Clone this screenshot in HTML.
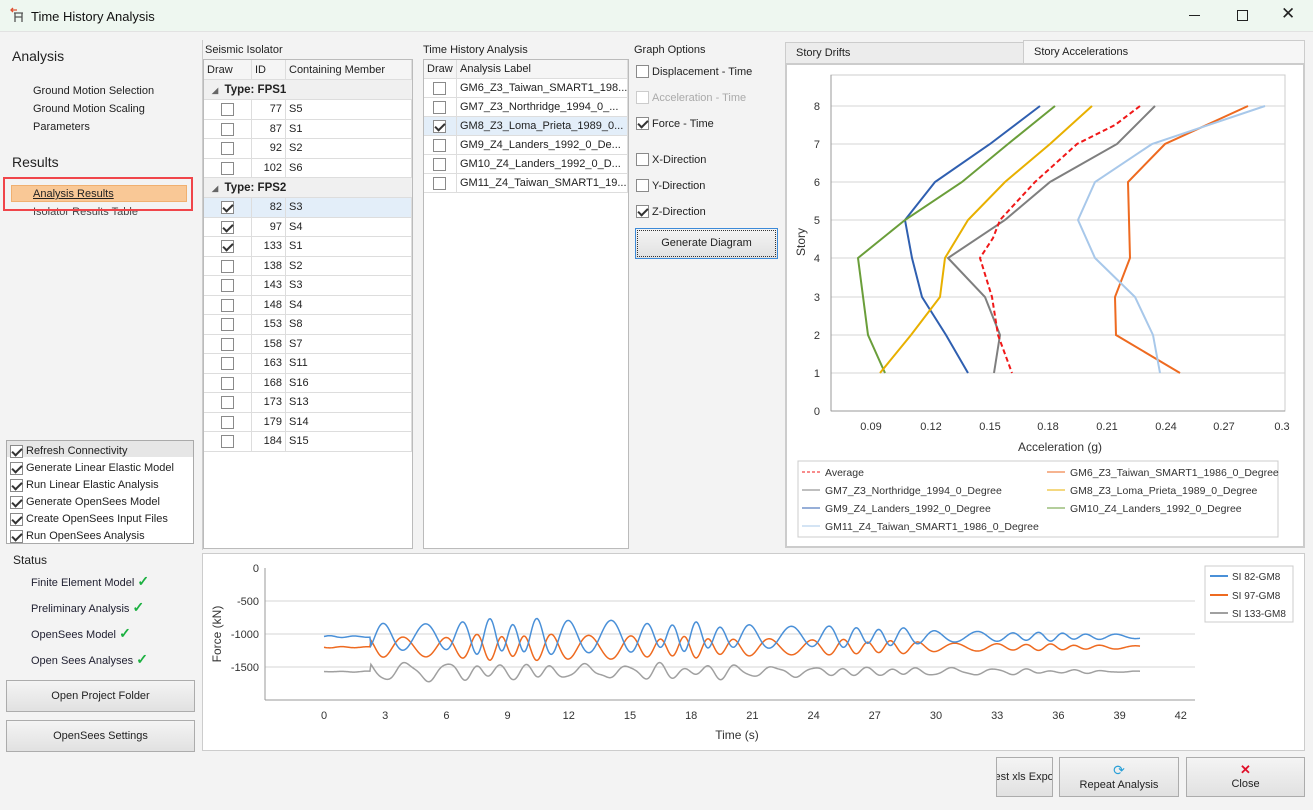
<!DOCTYPE html>
<html><head><meta charset="utf-8"><style>
*{box-sizing:border-box;margin:0;padding:0}
body{width:1313px;height:810px;overflow:hidden;background:#f3f3f3;font-family:"Liberation Sans",sans-serif;font-size:11px;color:#222;position:relative}
.a{position:absolute}
.cb{position:absolute;width:13px;height:13px;border:1px solid #8a8a8a;background:#fff}
.cb.k::after{content:"";position:absolute;left:3px;top:0px;width:4px;height:8px;border:solid #333;border-width:0 2px 2px 0;transform:rotate(45deg)}
.btn{position:absolute;border:1px solid #acacac;background:linear-gradient(#f4f4f4,#e1e1e1);text-align:center;font-size:11px;color:#222}
table{border-collapse:collapse}
</style></head><body>
<!-- title bar -->
<div class="a" style="left:0;top:0;width:1313px;height:32px;background:#eef7f0;border-bottom:1px solid #e2e2e2"></div>
<svg class="a" style="left:9px;top:7px" width="16" height="16"><path d="M2 3h6M4 1l-2 2 2 2" stroke="#e05030" fill="none" stroke-width="1.3"/><path d="M5 6h9M6 6v9M13 6v9M6 10h7" stroke="#555" fill="none" stroke-width="1.3"/></svg>
<div class="a" style="left:31px;top:9px;font-size:13px;color:#111">Time History Analysis</div>
<div class="a" style="left:1189px;top:15px;width:11px;height:1px;background:#222"></div>
<div class="a" style="left:1237px;top:10px;width:11px;height:11px;border:1px solid #222"></div>
<div class="a" style="left:1281px;top:4px;font-size:17px;color:#222">✕</div>

<!-- left nav -->
<div class="a" style="left:12px;top:48px;font-size:14px">Analysis</div>
<div class="a" style="left:33px;top:82px;line-height:18px">Ground Motion Selection<br>Ground Motion Scaling<br>Parameters</div>
<div class="a" style="left:12px;top:154px;font-size:14px">Results</div>
<div class="a" style="left:33px;top:206px;color:#444">Isolator Results Table</div>
<div class="a" style="left:11px;top:185px;width:176px;height:17px;background:#f9c896;border:1px solid #f0b070"></div>
<div class="a" style="left:33px;top:188px;text-decoration:underline">Analysis Results</div>
<div class="a" style="left:3px;top:177px;width:190px;height:34px;border:2px solid #f0454a"></div>

<div class="a" style="left:6px;top:440px;width:188px;height:104px;border:1px solid #aaa;background:#fff"></div>
<div class="a" style="left:7px;top:441px;width:186px;height:16px;background:#e6e6e6"></div>
<div class="a" style="left:10px;top:443px;line-height:17px;">
<div style="position:relative;padding-left:16px">Refresh Connectivity<span class="cb k" style="left:0;top:2px"></span></div>
<div style="position:relative;padding-left:16px">Generate Linear Elastic Model<span class="cb k" style="left:0;top:2px"></span></div>
<div style="position:relative;padding-left:16px">Run Linear Elastic Analysis<span class="cb k" style="left:0;top:2px"></span></div>
<div style="position:relative;padding-left:16px">Generate OpenSees Model<span class="cb k" style="left:0;top:2px"></span></div>
<div style="position:relative;padding-left:16px">Create OpenSees Input Files<span class="cb k" style="left:0;top:2px"></span></div>
<div style="position:relative;padding-left:16px">Run OpenSees Analysis<span class="cb k" style="left:0;top:2px"></span></div>
</div>
<div class="a" style="left:13px;top:553px;font-size:12px">Status</div>
<div class="a" style="left:31px;top:573px;color:#223">Finite Element Model <span style="color:#1bb040;font-size:14px;font-weight:bold">✓</span></div>
<div class="a" style="left:31px;top:599px;color:#223">Preliminary Analysis <span style="color:#1bb040;font-size:14px;font-weight:bold">✓</span></div>
<div class="a" style="left:31px;top:625px;color:#223">OpenSees Model <span style="color:#1bb040;font-size:14px;font-weight:bold">✓</span></div>
<div class="a" style="left:31px;top:651px;color:#223">Open Sees Analyses <span style="color:#1bb040;font-size:14px;font-weight:bold">✓</span></div>
<div class="btn" style="left:6px;top:680px;width:189px;height:32px;line-height:30px">Open Project Folder</div>
<div class="btn" style="left:6px;top:720px;width:189px;height:32px;line-height:30px">OpenSees Settings</div>

<!-- Seismic isolator -->
<div class="a" style="left:202px;top:40px;width:1px;height:510px;background:#ccc"></div>
<div class="a" style="left:205px;top:44px">Seismic Isolator</div>
<div class="a" style="left:203px;top:59px;width:210px;height:490px;border:1px solid #bbb;background:#fff"></div>
<div class="a" id="iso" style="left:204px;top:60px;width:208px"></div>

<!-- TH analysis -->
<div class="a" style="left:423px;top:44px">Time History Analysis</div>
<div class="a" style="left:423px;top:59px;width:206px;height:490px;border:1px solid #bbb;background:#fff"></div>
<div class="a" id="th" style="left:424px;top:60px;width:204px"></div>

<!-- graph options -->
<div class="a" style="left:634px;top:44px">Graph Options</div>
<div class="cb" style="left:636px;top:65px"></div><div class="a" style="left:652px;top:66px">Displacement - Time</div>
<div class="cb" style="left:636px;top:91px;border-color:#ccc"></div><div class="a" style="left:652px;top:92px;color:#aaa">Acceleration - Time</div>
<div class="cb k" style="left:636px;top:117px"></div><div class="a" style="left:652px;top:118px">Force - Time</div>
<div class="cb" style="left:636px;top:153px"></div><div class="a" style="left:652px;top:154px">X-Direction</div>
<div class="cb" style="left:636px;top:179px"></div><div class="a" style="left:652px;top:180px">Y-Direction</div>
<div class="cb k" style="left:636px;top:205px"></div><div class="a" style="left:652px;top:206px">Z-Direction</div>
<div class="btn" style="left:635px;top:228px;width:143px;height:31px;line-height:29px;border:1px solid #3c8ad8;outline:1px dotted #333;outline-offset:-3px">Generate Diagram</div>

<!-- tabs -->
<div class="a" style="left:785px;top:42px;width:240px;height:22px;background:#ececec;border:1px solid #ccc;padding:4px 0 0 10px">Story Drifts</div>
<div class="a" style="left:1023px;top:40px;width:282px;height:24px;background:#f6f6f6;border:1px solid #ccc;padding:5px 0 0 10px">Story Accelerations</div>
<div class="a" style="left:785px;top:63px;width:520px;height:485px;border:2px solid #ccc;background:#fff"></div>
<svg class="a" style="left:785px;top:63px" width="520" height="485" font-family="Liberation Sans" font-size="11" fill="#333">
<g transform="translate(-785,-63)">
<rect x="831" y="75" width="454" height="336" fill="none" stroke="#ccc"/>
<g stroke="#d6d6d6"><line x1="831" x2="1285" y1="106" y2="106"/><line x1="831" x2="1285" y1="144" y2="144"/><line x1="831" x2="1285" y1="182" y2="182"/><line x1="831" x2="1285" y1="220" y2="220"/><line x1="831" x2="1285" y1="258" y2="258"/><line x1="831" x2="1285" y1="297" y2="297"/><line x1="831" x2="1285" y1="335" y2="335"/><line x1="831" x2="1285" y1="373" y2="373"/></g>
<line x1="831" y1="75" x2="831" y2="411" stroke="#999"/><line x1="831" y1="411" x2="1285" y1="411" y2="411" stroke="#999"/>
<g text-anchor="end"><text x="820" y="110">8</text><text x="820" y="148">7</text><text x="820" y="186">6</text><text x="820" y="224">5</text><text x="820" y="262">4</text><text x="820" y="301">3</text><text x="820" y="339">2</text><text x="820" y="377">1</text><text x="820" y="415">0</text></g>
<g text-anchor="middle"><text x="871" y="430">0.09</text><text x="931" y="430">0.12</text><text x="990" y="430">0.15</text><text x="1048" y="430">0.18</text><text x="1107" y="430">0.21</text><text x="1166" y="430">0.24</text><text x="1224" y="430">0.27</text><text x="1282" y="430">0.3</text>
<text x="1060" y="451" font-size="12">Acceleration (g)</text></g>
<text transform="translate(805,242) rotate(-90)" text-anchor="middle" font-size="12">Story</text>
<g fill="none" stroke-width="2">
<polyline stroke="#2f5fb0" points="1040,106 990,144 935,182 905,220 912,258 922,297 946,335 968,373"/>
<polyline stroke="#6a9e3a" points="1055,106 1008,144 962,182 905,220 858,258 868,335 885,373"/>
<polyline stroke="#e8b000" points="1092,106 1050,144 1005,182 968,220 945,258 940,297 911,335 880,373"/>
<polyline stroke="#7f7f7f" points="1155,106 1117,144 1050,182 1005,220 948,258 985,297 1000,335 994,373"/>
<polyline stroke="#ee6a20" points="1248,106 1165,144 1128,182 1130,258 1115,297 1116,335 1180,373"/>
<polyline stroke="#a8c8ea" points="1265,106 1152,144 1095,182 1078,220 1095,258 1135,297 1153,335 1160,373"/>
<polyline stroke="#f01818" stroke-dasharray="5,3" points="1140,106 1115,125 1077,144 1035,182 1000,220 993,238 980,258 992,297 998,335 1012,373"/>
</g>
<rect x="798" y="461" width="480" height="76" fill="none" stroke="#ccc"/>
<g font-size="10.5">
<line x1="802" x2="820" y1="472" y2="472" stroke="#f01818" stroke-dasharray="3,2"/><text x="825" y="476">Average</text>
<line x1="802" x2="820" y1="490" y2="490" stroke="#7f7f7f"/><text x="825" y="494">GM7_Z3_Northridge_1994_0_Degree</text>
<line x1="802" x2="820" y1="508" y2="508" stroke="#2f5fb0"/><text x="825" y="512">GM9_Z4_Landers_1992_0_Degree</text>
<line x1="802" x2="820" y1="526" y2="526" stroke="#a8c8ea"/><text x="825" y="530">GM11_Z4_Taiwan_SMART1_1986_0_Degree</text>
<line x1="1047" x2="1065" y1="472" y2="472" stroke="#ee6a20"/><text x="1070" y="476">GM6_Z3_Taiwan_SMART1_1986_0_Degree</text>
<line x1="1047" x2="1065" y1="490" y2="490" stroke="#e8b000"/><text x="1070" y="494">GM8_Z3_Loma_Prieta_1989_0_Degree</text>
<line x1="1047" x2="1065" y1="508" y2="508" stroke="#6a9e3a"/><text x="1070" y="512">GM10_Z4_Landers_1992_0_Degree</text>
</g></g></svg>

<!-- force chart -->
<div class="a" style="left:202px;top:553px;width:1103px;height:198px;border:1px solid #ccc;background:#fff"></div>
<svg class="a" style="left:0;top:0" width="1313" height="810" font-family="Liberation Sans" font-size="11" fill="#333" id="fc">
<g stroke="#d6d6d6"><line x1="265" x2="1195" y1="601" y2="601"/><line x1="265" x2="1195" y1="634" y2="634"/><line x1="265" x2="1195" y1="667" y2="667"/></g>
<line x1="265" y1="568" x2="265" y2="700" stroke="#999"/><line x1="265" y1="700" x2="1195" y2="700" stroke="#999"/>
<g text-anchor="end"><text x="259" y="572">0</text><text x="259" y="605">-500</text><text x="259" y="638">-1000</text><text x="259" y="671">-1500</text></g>
<g text-anchor="middle" id="xt"></g>
<text x="737" y="739" text-anchor="middle" font-size="12">Time (s)</text>
<text transform="translate(221,634) rotate(-90)" text-anchor="middle" font-size="12">Force (kN)</text>
<rect x="1205" y="566" width="88" height="56" fill="#fff" stroke="#ccc"/>
<line x1="1210" x2="1228" y1="576" y2="576" stroke="#4a90d8" stroke-width="2"/><text x="1232" y="580" font-size="10">SI 82-GM8</text>
<line x1="1210" x2="1228" y1="595" y2="595" stroke="#ee6a20" stroke-width="2"/><text x="1232" y="599" font-size="10">SI 97-GM8</text>
<line x1="1210" x2="1228" y1="613" y2="613" stroke="#a0a0a0" stroke-width="2"/><text x="1232" y="617" font-size="10">SI 133-GM8</text>
<polyline id="p3" fill="none" stroke="#a0a0a0" stroke-width="1.5"/>
<polyline id="p2" fill="none" stroke="#ee6a20" stroke-width="1.5"/>
<polyline id="p1" fill="none" stroke="#4a90d8" stroke-width="1.5"/>
</svg>

<!-- bottom buttons -->
<div class="btn" style="left:996px;top:757px;width:57px;height:40px;line-height:38px;overflow:hidden;white-space:nowrap;text-indent:-8px">Test xls Export</div>
<div class="btn" style="left:1059px;top:757px;width:120px;height:40px;padding-top:4px"><span style="color:#2aa0d8;font-size:14px">⟳</span><br>Repeat Analysis</div>
<div class="btn" style="left:1186px;top:757px;width:119px;height:40px;padding-top:4px"><span style="color:#e0102a;font-size:13px;font-weight:bold">✕</span><br>Close</div>

<script>
function row(cells,ws,h,bg,bold){var s='<div style="display:flex;height:'+h+'px;border-bottom:1px solid #ddd;background:'+(bg||'#fff')+'">';cells.forEach(function(c,i){s+='<div style="position:relative;width:'+ws[i]+'px;border-right:1px solid #ddd;padding:0 3px;line-height:'+h+'px;white-space:nowrap;overflow:hidden;'+(c.r?'text-align:right;':'')+'">'+c.t+'</div>'});return s+'</div>';}
var W=[48,34,126];var s=row([{t:'Draw'},{t:'ID'},{t:'Containing Member'}],W,20,'#f5f5f5');
function grp(n){return '<div style="height:20px;line-height:20px;background:#f0f0f0;border-bottom:1px solid #ddd;font-weight:bold;font-size:11.5px;padding-left:8px"><span style="font-size:8px;color:#666">◢</span>&nbsp; Type: '+n+'</div>';}
function cb(k){return '<span class="cb'+(k?' k':'')+'" style="left:17px;top:3px"></span>';}
s+=grp('FPS1');[[77,'S5'],[87,'S1'],[92,'S2'],[102,'S6']].forEach(function(r){s+=row([{t:cb(0)},{t:r[0],r:1},{t:r[1]}],W,19.5)});
s+=grp('FPS2');[[82,'S3',1],[97,'S4',1],[133,'S1',1],[138,'S2'],[143,'S3'],[148,'S4'],[153,'S8'],[158,'S7'],[163,'S11'],[168,'S16'],[173,'S13'],[179,'S14'],[184,'S15']].forEach(function(r,i){s+=row([{t:cb(r[2])},{t:r[0],r:1},{t:r[1]}],W,19.5,i==0?'#e3eef9':'#fff')});
document.getElementById('iso').innerHTML=s;
var W2=[33,171];s=row([{t:'Draw'},{t:'Analysis Label'}],W2,19,'#f5f5f5');
['GM6_Z3_Taiwan_SMART1_198...','GM7_Z3_Northridge_1994_0_...','GM8_Z3_Loma_Prieta_1989_0...','GM9_Z4_Landers_1992_0_De...','GM10_Z4_Landers_1992_0_D...','GM11_Z4_Taiwan_SMART1_19...'].forEach(function(t,i){s+=row([{t:'<span class="cb'+(i==2?' k':'')+'" style="left:9px;top:3px"></span>'},{t:t}],W2,19,i==2?'#e3eef9':'#fff')});
document.getElementById('th').innerHTML=s;
var xt='';for(var t=0;t<=42;t+=3){var x=324+t*20.4;xt+='<text x="'+x+'" y="719">'+t+'</text>';}document.getElementById('xt').innerHTML=xt;
function env(t){if(t<2.3)return 0.05;if(t<13)return 1;return Math.max(0.1,1-(t-13)/30);}
var a='',b='',c='';
for(var t=0;t<=40;t+=0.05){var x=324+t*20.4;var e=env(t);
var w=Math.sin(t*4.2+Math.sin(t*0.7)*2)*e;var w2=Math.sin(t*3.1+1)*e*0.4;
var f1=-1040-(w*230+w2*120);var f2=-1200+(w*170+w2*80);var f3=-1570+(w*120-w2*100)+Math.sin(t*7)*20*e;
a+=x+','+(568-f1*-0.066*-1*-1)+' ';}
a='';b='';c='';
for(var t=0;t<=40;t+=0.05){var x=324+t*20.4;var e=env(t);
var w=Math.sin(t*4.2+Math.sin(t*0.7)*2)*e;var w2=Math.sin(t*3.1+1)*e*0.4;
var f1=-1040+(w*230+w2*120);var f2=-1200-(w*170+w2*80);var f3=-1570+(-w*100+w2*100)+Math.sin(t*7)*20*e;
a+=x+','+(568-f1*0.066)+' ';b+=x+','+(568-f2*0.066)+' ';c+=x+','+(568-f3*0.066)+' ';}
document.getElementById('p1').setAttribute('points',a);document.getElementById('p2').setAttribute('points',b);document.getElementById('p3').setAttribute('points',c);
</script>
</body></html>
